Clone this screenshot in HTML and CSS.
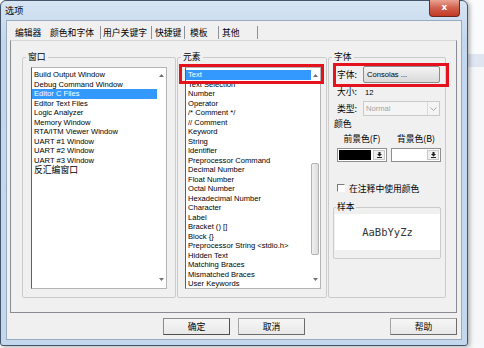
FILE: index.html
```html
<!DOCTYPE html>
<html lang="zh-CN">
<head>
    <meta charset="UTF-8">
    <meta name="viewport" content="width=device-width, initial-scale=1.0">
    <title>选项</title>
    <link rel="stylesheet" href="styles.css">
</head>
<body>
    <div class="window">
        <div class="titlebar">
            <span class="title zh">选项</span>
            <span class="close-btn">x</span>
        </div>
        <div class="client">
            <div class="tabs">
                <span class="tab tab-1 zh">编辑器</span>
                <span class="tab tab-2 zh">颜色和字体</span>
                <span class="tab tab-3 zh">用户关键字</span>
                <span class="tab tab-4 zh">快捷键</span>
                <span class="tab tab-5 zh">模板</span>
                <span class="tab tab-6 zh">其他</span>
            </div>
            <div class="panel">
                <div class="groups">
                    <!-- 窗口 -->
                    <fieldset class="group">
                        <legend class="zh">窗口</legend>
                        <div class="group-body left-body">
                            <div class="listbox">
                                <ul class="items">
                                    <li>Build Output Window</li>
                                    <li>Debug Command Window</li>
                                    <li class="selected">Editor C Files</li>
                                    <li>Editor Text Files</li>
                                    <li>Logic Analyzer</li>
                                    <li>Memory Window</li>
                                    <li>RTA/ITM Viewer Window</li>
                                    <li>UART #1 Window</li>
                                    <li>UART #2 Window</li>
                                    <li>UART #3 Window</li>
                                    <li class="zh">反汇编窗口</li>
                                </ul>
                                <div class="scroll">
                                    <svg width="5" height="3" viewBox="0 0 5 3"><path d="M0 3h5L2.5 0z" fill="#707070"/></svg>
                                    <svg width="5" height="3" viewBox="0 0 5 3"><path d="M0 0h5L2.5 3z" fill="#707070"/></svg>
                                </div>
                            </div>
                        </div>
                    </fieldset>

                    <!-- 元素 -->
                    <fieldset class="group">
                        <legend class="zh">元素</legend>
                        <div class="group-body mid-body">
                            <div class="listbox">
                                <ul class="items">
                                    <li class="selected">Text</li>
                                    <li>Text Selection</li>
                                    <li>Number</li>
                                    <li>Operator</li>
                                    <li>/* Comment */</li>
                                    <li>// Comment</li>
                                    <li>Keyword</li>
                                    <li>String</li>
                                    <li>Identifier</li>
                                    <li>Preprocessor Command</li>
                                    <li>Decimal Number</li>
                                    <li>Float Number</li>
                                    <li>Octal Number</li>
                                    <li>Hexadecimal Number</li>
                                    <li>Character</li>
                                    <li>Label</li>
                                    <li>Bracket () []</li>
                                    <li>Block {}</li>
                                    <li>Preprocessor String &lt;stdio.h&gt;</li>
                                    <li>Hidden Text</li>
                                    <li>Matching Braces</li>
                                    <li>Mismatched Braces</li>
                                    <li>User Keywords</li>
                                </ul>
                                <div class="scroll">
                                    <svg width="5" height="3" viewBox="0 0 5 3"><path d="M0 3h5L2.5 0z" fill="#707070"/></svg>
                                    <div class="track"><div class="thumb"></div></div>
                                    <svg width="5" height="3" viewBox="0 0 5 3"><path d="M0 0h5L2.5 3z" fill="#707070"/></svg>
                                </div>
                            </div>
                        </div>
                    </fieldset>

                    <!-- 字体 -->
                    <fieldset class="group">
                        <legend class="zh">字体</legend>
                        <div class="group-body right-body">
                            <div class="row row-font">
                                <span class="field-label zh">字体:</span>
                                <span class="font-btn">Consolas ...</span>
                            </div>
                            <div class="row row-size">
                                <span class="field-label zh">大小:</span>
                                <span class="size-value">12</span>
                            </div>
                            <div class="row row-type">
                                <span class="field-label zh">类型:</span>
                                <span class="combo-disabled">
                                    <span class="combo-text">Normal</span>
                                    <span class="combo-arrow">
                                        <svg width="7" height="4" viewBox="0 0 7 4"><path d="M0.5 0.5l3 3 3-3" stroke="#a8a8a8" fill="none"/></svg>
                                    </span>
                                </span>
                            </div>

                            <fieldset class="sub colors">
                                <legend class="zh">颜色</legend>
                                <div class="color-labels">
                                    <span class="zh">前景色(F)</span>
                                    <span class="zh">背景色(B)</span>
                                </div>
                                <div class="color-combos">
                                    <span class="color-combo">
                                        <span class="swatch swatch-black"></span>
                                        <span class="drop-btn">
                                            <svg width="5" height="6" viewBox="0 0 5 6"><path d="M1.5 0h2v2h1.5L2.5 4.5 0 2h1.5z M0 5h5v1H0z" fill="#202020"/></svg>
                                        </span>
                                    </span>
                                    <span class="color-combo">
                                        <span class="swatch swatch-white"></span>
                                        <span class="drop-btn">
                                            <svg width="5" height="6" viewBox="0 0 5 6"><path d="M1.5 0h2v2h1.5L2.5 4.5 0 2h1.5z M0 5h5v1H0z" fill="#202020"/></svg>
                                        </span>
                                    </span>
                                </div>
                                <div class="check-row">
                                    <span class="checkbox"></span>
                                    <span class="zh">在注释中使用颜色</span>
                                </div>
                            </fieldset>

                            <fieldset class="sub sample">
                                <legend class="zh">样本</legend>
                                <div class="sample-box">AaBbYyZz</div>
                            </fieldset>
                        </div>
                    </fieldset>
                </div>
            </div>
            <div class="buttons">
                <span class="btn btn-default zh">确定</span>
                <span class="btn zh">取消</span>
                <span class="btn btn-help zh">帮助</span>
            </div>
        </div>
    </div>

    <!-- red highlight marks drawn over the dialog -->
    <div class="mark mark-text"></div>
    <div class="mark mark-font"></div>
</body>
</html>
```

FILE: styles.css
```css
* {
    box-sizing: border-box;
}

body {
    margin: 0;
    width: 484px;
    height: 348px;
    overflow: hidden;
    font-family: 'Liberation Sans', 'Noto Sans CJK SC', sans-serif;
    font-size: 7.6px;
    color: #000;
    background: linear-gradient(to bottom, #fafbfd 0, #fafbfd 54px, #dfe6f2 54px, #dfe6f2 67px, #f6f7f9 67px);
}

.zh {
    font-family: 'Noto Sans CJK SC', sans-serif;
    font-size: 8.8px;
}

/* window frame */
.window {
    width: 468px;
    height: 346px;
    border: 1px solid #45566b;
    border-radius: 6px 6px 3px 3px;
    background: linear-gradient(to bottom, #d6e4f3, #c2d7ed 40px, #c4d8ed);
    display: flex;
    flex-direction: column;
    box-shadow: 2px 1px 4px rgba(0, 0, 0, 0.3);
}

.titlebar {
    height: 19px;
    display: flex;
    align-items: flex-start;
    padding-left: 4px;
}

.title {
    line-height: 18px;
    font-size: 9.2px;
}

.close-btn {
    margin-left: auto;
    margin-right: 7px;
    margin-top: -1px;
    width: 31px;
    height: 17px;
    border: 1px solid #6a2a22;
    border-top: none;
    border-radius: 0 0 4px 4px;
    background: linear-gradient(to bottom, #e9a394, #d0604c 50%, #c23a26);
    color: #fff;
    font-family: 'DejaVu Sans', sans-serif;
    font-weight: bold;
    font-size: 9px;
    line-height: 15px;
    text-align: center;
}

.client {
    margin: 0 5px;
    height: 320px;
    background-color: #f0f0f0;
    border: 1px solid #9aabc0;
    display: flex;
    flex-direction: column;
}

/* tabs */
.tabs {
    height: 19px;
    display: flex;
    align-items: flex-end;
    padding-left: 8px;
}

.tab {
    flex-shrink: 0;
    height: 13px;
    line-height: 13px;
    margin-bottom: 1px;
    white-space: nowrap;
}

.tab-1 { width: 31px; }
.tab-2 { width: 54px; padding-left: 4px; }
.tab-3 { width: 51px; padding-left: 2px; border-left: 1px solid #8d9097; }
.tab-4 { width: 33px; padding-left: 3px; border-left: 1px solid #8d9097; }
.tab-5 { width: 34px; padding-left: 5px; border-left: 1px solid #8d9097; }
.tab-6 { width: 40px; padding-left: 3px; border-left: 1px solid #8d9097; border-right: 1px solid #8d9097; }

.panel {
    margin: 0 4px 0 3px;
    height: 273px;
    border: 1px solid #898c95;
    border-top-color: #d6d6d6;
    padding: 11px 10px 0 11px;
}

.groups {
    display: grid;
    grid-template-columns: 154px 150px 118px;
    column-gap: 1px;
    height: 246px;
}

fieldset {
    margin: 0;
    padding: 0;
    min-width: 0;
}

legend {
    padding: 0 2px;
    margin-left: 3px;
    line-height: 10px;
}

.group {
    border: 1px solid #cbcbcb;
    border-radius: 2px;
}

.group-body {
    padding-top: 5px;
}

.left-body { padding-left: 8px; }
.mid-body { padding-left: 7px; }
.right-body { padding-top: 4px; padding-left: 4px; }

/* list boxes */
.listbox {
    width: 136px;
    height: 222px;
    display: flex;
    background-color: white;
    border: 1px solid #b4b4b4;
    border-left-color: #5f5f5f;
    overflow: hidden;
}

.items {
    list-style: none;
    margin: 0;
    padding: 2px 0 0 0;
    flex: 1;
    overflow: hidden;
}

.items li {
    height: 9.5px;
    line-height: 9.5px;
    padding-left: 2px;
    white-space: nowrap;
}

.items li.selected {
    background-color: #3399ff;
    color: white;
}

.scroll {
    width: 9px;
    display: flex;
    flex-direction: column;
    align-items: center;
    justify-content: space-between;
    padding: 6px 0 7px 0;
}

.track {
    flex: 1;
    width: 100%;
    padding-top: 86px;
}

.thumb {
    width: 8px;
    height: 92px;
    border: 1px solid #b2b2b2;
    border-radius: 2px;
    background: linear-gradient(to right, #f0f0f0, #dcdcdc);
}

/* font column */
.row {
    display: flex;
    align-items: center;
    padding-left: 4px;
    width: 108px;
}

.row-font { height: 17px; }
.row-size { height: 10px; margin-top: 4px; }
.row-type { height: 15px; margin-top: 4px; }

.field-label {
    width: 26px;
    flex-shrink: 0;
    line-height: 10px;
}

.size-value {
    padding-left: 2px;
}

.font-btn {
    width: 77px;
    height: 17px;
    line-height: 15px;
    padding-left: 3px;
    border: 1px solid #8c8c8c;
    border-radius: 2px;
    background: linear-gradient(to bottom, #f4f4f4, #e6e6e6 50%, #dadada);
}

.combo-disabled {
    width: 77px;
    height: 15px;
    display: flex;
    border: 1px solid #cacaca;
    background-color: #f4f4f4;
    color: #a3a3a3;
}

.combo-text {
    flex: 1;
    line-height: 13px;
    padding-left: 2px;
}

.combo-arrow {
    width: 12px;
    display: flex;
    align-items: center;
    justify-content: center;
    border-left: 1px solid #dadada;
}

.sub {
    width: 108px;
    border: none;
}

.sub legend {
    margin-left: 1px;
    padding: 0;
}

.colors {
    margin-top: 3px;
}

.color-labels {
    display: flex;
    gap: 4px;
    padding: 5px 0 0 4px;
}

.color-labels span {
    width: 50px;
    text-align: center;
    line-height: 10px;
}

.color-combos {
    display: flex;
    gap: 4px;
    padding-left: 4px;
    margin-top: 4px;
}

.color-combo {
    width: 51px;
    height: 14px;
    display: flex;
    border: 1px solid #8f8f8f;
    background-color: white;
    padding: 1px;
}

.swatch {
    flex: 1;
}

.swatch-black { background-color: #000; }
.swatch-white { background-color: #fff; }

.drop-btn {
    width: 12px;
    margin-left: 2px;
    display: flex;
    align-items: center;
    justify-content: center;
    background-color: #f0f0f0;
    border: 1px solid #c8c8c8;
}

.check-row {
    display: flex;
    align-items: center;
    height: 10px;
    margin-top: 21px;
    padding-left: 4px;
}

.checkbox {
    width: 8px;
    height: 8px;
    margin-right: 4px;
    background-color: white;
    border: 1px solid;
    border-color: #7a7a7a #ffffff #ffffff #7a7a7a;
}

.sample {
    margin-top: 9px;
    border: 1px solid #cbcbcb;
    border-radius: 2px;
    padding: 2px 0 8px 1px;
}

.sample legend {
    padding: 0 1px;
}

.sample-box {
    width: 105px;
    height: 36px;
    background-color: white;
    color: #333;
    font-family: 'DejaVu Sans Mono', monospace;
    font-size: 10.5px;
    line-height: 36px;
    text-align: center;
}

/* bottom buttons */
.buttons {
    display: flex;
    margin-top: 5px;
    padding-left: 156px;
    gap: 8px;
}

.btn {
    width: 67px;
    height: 17px;
    line-height: 15px;
    text-align: center;
    border: 1px solid;
    border-color: #a5a5a5 #6c6c6c #6c6c6c #a5a5a5;
    background: linear-gradient(to bottom, #f6f6f6, #e8e8e8);
}

.btn-default {
    border-color: #8a8a8a #4f4f4f #4f4f4f #8a8a8a;
}

.btn-help {
    margin-left: 77px;
}

/* red marks */
.mark {
    position: absolute;
    border: 3px solid #e4121d;
}

.mark-text {
    left: 179px;
    top: 64px;
    width: 145px;
    height: 20px;
}

.mark-font {
    left: 333px;
    top: 63px;
    width: 116px;
    height: 24px;
}
```
